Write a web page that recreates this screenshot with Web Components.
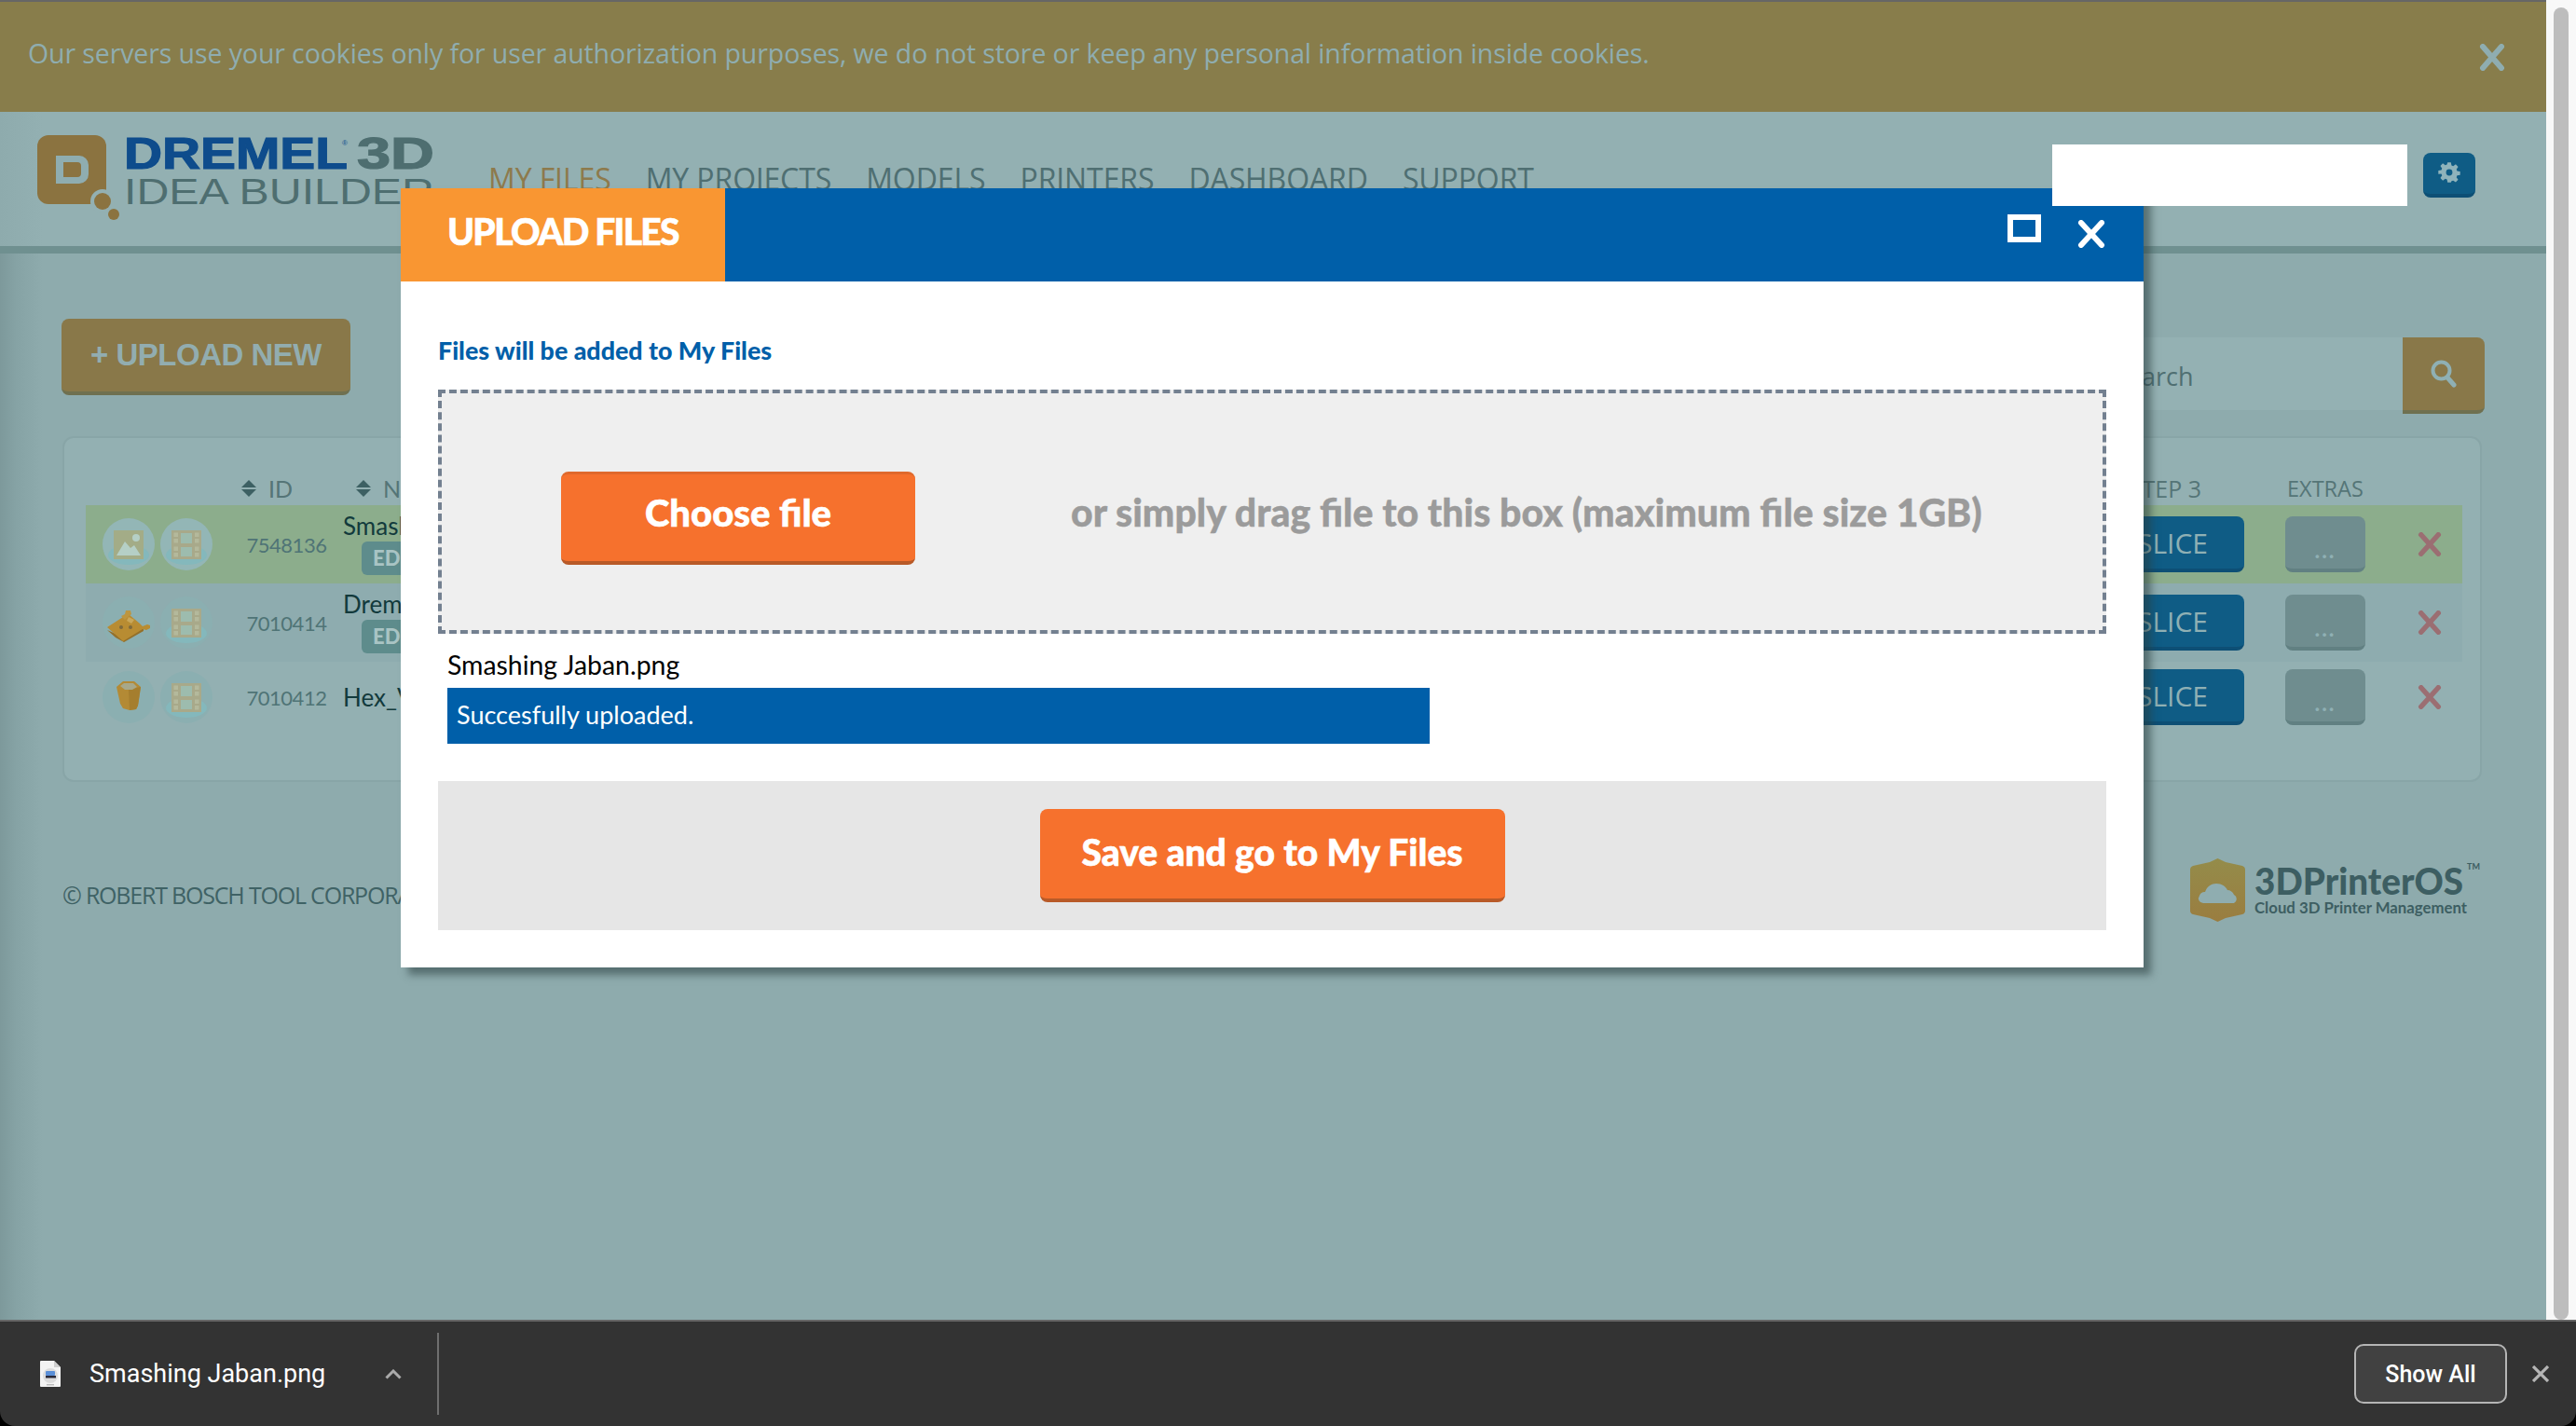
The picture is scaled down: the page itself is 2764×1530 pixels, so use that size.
<!DOCTYPE html>
<html lang="en">
<head>
<meta charset="utf-8">
<title>Upload files</title>
<style>
  html, body { margin: 0; padding: 0; background: #8eabad; overflow: hidden; }
</style>
</head>
<body>
<app-shell>
  <cookie-bar>Our servers use your cookies only for user authorization purposes, we do not store or keep any personal information inside cookies.</cookie-bar>
  <site-header></site-header>
  <files-toolbar></files-toolbar>
  <file-table>
    <file-row kind="image" file-id="7548136" name="Smashing Jaban" active editable></file-row>
    <file-row kind="base" file-id="7010414" name="Dremel Base" striped editable></file-row>
    <file-row kind="vase" file-id="7010412" name="Hex_Vase"></file-row>
  </file-table>
  <site-footer></site-footer>
  <upload-modal slot="modal"></upload-modal>
  <download-bar slot="bar"></download-bar>
</app-shell>

<script>
(() => {
  const rounded = `"Lato", "Open Sans", sans-serif`;
  const plain = `"Open Sans", "Liberation Sans", sans-serif`;

  const crossIcon = (w, h, color, sw) => `
    <svg width="${w}" height="${h}" viewBox="0 0 ${w} ${h}" style="display:block">
      <path d="M${sw / 2 + 1} ${sw / 2} L${w - sw / 2 - 1} ${h - sw / 2} M${w - sw / 2 - 1} ${sw / 2} L${sw / 2 + 1} ${h - sw / 2}"
        stroke="${color}" stroke-width="${sw}" stroke-linecap="round" fill="none"/>
    </svg>`;

  class AppShell extends HTMLElement {
    constructor() {
      super();
      this.attachShadow({ mode: 'open' });
      this.shadowRoot.innerHTML = `
        <style>
          :host { display: flex; flex-direction: column; width: 2764px; height: 1530px; overflow: hidden; }
          .top { display: flex; height: 1416px; position: relative; border-bottom: 2px solid #666; box-sizing: content-box; }
          .page {
            flex: 1; min-width: 0; position: relative; overflow: hidden;
            background: linear-gradient(90deg, #7d999b 0, #86a3a5 18px, #8eabad 46px, #8eabad 100%);
          }
          .rail { width: 32px; background: #f8f8f8; padding: 8px 8px 0; box-sizing: border-box; }
          .thumb { width: 16px; height: 1408px; background: #bdbdbd; border-radius: 8px; }
        </style>
        <div class="top">
          <div class="page"><slot></slot><slot name="modal"></slot></div>
          <div class="rail"><div class="thumb"></div></div>
        </div>
        <slot name="bar"></slot>
      `;
    }
  }

  class CookieBar extends HTMLElement {
    constructor() {
      super();
      this.attachShadow({ mode: 'open' });
      this.shadowRoot.innerHTML = `
        <style>
          :host {
            display: flex; align-items: center; justify-content: space-between; box-sizing: border-box;
            height: 120px; padding: 0 44px 0 30px; border-top: 2px solid #666;
            background: #887d4b; color: #8fadb0; font: 400 28.5px ${plain};
          }
          .t { margin-top: -8px; letter-spacing: -.1px; }
        </style>
        <span class="t"><slot></slot></span>
        ${crossIcon(28, 29, '#8fadb0', 6)}
      `;
    }
  }

  class BrandLogo extends HTMLElement {
    constructor() {
      super();
      this.attachShadow({ mode: 'open' });
      this.shadowRoot.innerHTML = `
        <style>:host { display: block; width: 430px; height: 92px; } svg { display: block; margin-top: -12px; }</style>
        <svg width="430" height="104" viewBox="0 -12 430 104">
          <rect x="0" y="0" width="74" height="74" rx="12" fill="#8b7340"/>
          <path d="M20 22h25a10 10 0 0 1 10 10v10a10 10 0 0 1-10 10H20z M28 29v16h15a4 4 0 0 0 4-4v-8a4 4 0 0 0-4-4z" fill="#8fadb0" fill-rule="evenodd"/>
          <circle cx="70" cy="71" r="13" fill="#93b0b2"/>
          <circle cx="70" cy="71" r="9" fill="#8b7340"/>
          <circle cx="82" cy="85" r="6" fill="#8b7340"/>
          <text x="93" y="36" font-family="Liberation Sans" font-weight="700" font-size="48" fill="#0e4c8c" textLength="240" lengthAdjust="spacingAndGlyphs" stroke="#0e4c8c" stroke-width="1.2">DREMEL</text>
          <text x="327" y="11" font-family="Liberation Sans" font-size="8" fill="#0e4c8c">®</text>
          <text x="343" y="36" font-family="Liberation Sans" font-weight="700" font-size="48" fill="#4e6e70" textLength="83" lengthAdjust="spacingAndGlyphs" stroke="#4e6e70" stroke-width="1.2">3D</text>
          <text x="93" y="74" font-family="Liberation Sans" font-size="39" fill="#4e6e70" textLength="333" lengthAdjust="spacingAndGlyphs">IDEA BUILDER</text>
        </svg>
      `;
    }
  }

  class SiteHeader extends HTMLElement {
    constructor() {
      super();
      this.attachShadow({ mode: 'open' });
      const links = ['MY FILES', 'MY PROJECTS', 'MODELS', 'PRINTERS', 'DASHBOARD', 'SUPPORT'];
      this.shadowRoot.innerHTML = `
        <style>
          :host {
            display: flex; align-items: flex-start; box-sizing: border-box; height: 152px;
            padding: 25px 76px 0 40px; border-bottom: 8px solid #6f9090;
            background: linear-gradient(90deg, #8eabad 0, #93b0b2 46px);
          }
          nav { display: flex; gap: 37px; margin: 25px 0 0 54px; font: 400 32px ${plain}; color: #4f6f72; white-space: nowrap; letter-spacing: -.1px; }
          nav span:first-child { color: #8d7a4c; }
          .blank { position: relative; z-index: 20; width: 381px; height: 66px; margin: 10px 17px 0 auto; background: #fff; }
          .gear {
            display: flex; align-items: center; justify-content: center; box-sizing: border-box;
            width: 56px; height: 48px; margin-top: 19px; padding-bottom: 3px;
            background: #0f5c85; border-bottom: 4px solid #0d4f75; border-radius: 8px;
          }
        </style>
        <brand-logo></brand-logo>
        <nav>${links.map(l => `<span>${l}</span>`).join('')}</nav>
        <div class="blank"></div>
        <div class="gear">
          <svg width="24" height="24" viewBox="0 0 24 24">
            <path fill-rule="evenodd" fill="#8fb3bb" d="M10 0h4l.7 3.6 2 .8 3-2 2.9 2.9-2 3 .8 2 3.6.7v4l-3.6.7-.8 2 2 3-2.9 2.9-3-2-2 .8L14 24h-4l-.7-3.6-2-.8-3 2-2.9-2.9 2-3-.8-2L-1 13.9v-4l3.6-.7.8-2-2-3 2.9-2.9 3 2 2-.8z M12 8.2a3.8 3.8 0 1 0 0 7.6 3.8 3.8 0 0 0 0-7.6z" transform="translate(1.2 1.2) scale(.9)"/>
          </svg>
        </div>
      `;
    }
  }

  class FilesToolbar extends HTMLElement {
    constructor() {
      super();
      this.attachShadow({ mode: 'open' });
      this.shadowRoot.innerHTML = `
        <style>
          :host { display: flex; align-items: flex-start; justify-content: space-between; box-sizing: border-box; height: 196px; padding: 70px 66px 0; }
          .upload {
            display: flex; align-items: center; justify-content: center; box-sizing: border-box;
            width: 310px; height: 82px; background: #897849; border-bottom: 4px solid #6f7050; border-radius: 8px;
            color: #92adb0; font: 700 33px "Liberation Sans", sans-serif; white-space: nowrap; letter-spacing: -.5px;
          }
          .search { display: flex; margin-top: 20px; height: 82px; }
          .input {
            width: 380px; height: 78px; padding: 5px 0 0 70px; box-sizing: border-box; background: #94b1b3;
            display: flex; align-items: center; color: #4f6f72; font: 400 27px ${plain};
          }
          .btn {
            display: flex; align-items: center; justify-content: center; box-sizing: border-box; width: 88px;
            background: #897849; border-bottom: 4px solid #6f7050; border-radius: 0 8px 8px 0;
          }
        </style>
        <div class="upload">+ UPLOAD NEW</div>
        <div class="search">
          <div class="input">Search</div>
          <div class="btn">
            <svg width="28" height="30" viewBox="0 0 28 30" fill="none" stroke="#8fb0b4">
              <circle cx="11.5" cy="11.5" r="9" stroke-width="4"/>
              <path d="M18 19l7 8" stroke-width="5" stroke-linecap="round"/>
            </svg>
          </div>
        </div>
      `;
    }
  }

  class FileTable extends HTMLElement {
    constructor() {
      super();
      this.attachShadow({ mode: 'open' });
      const arrows = `<svg width="16" height="18" viewBox="0 0 16 18"><path d="M8 0l8 8H0z M0 10h16l-8 8z" fill="#3d6063"/></svg>`;
      this.shadowRoot.innerHTML = `
        <style>
          :host {
            display: block; box-sizing: border-box; height: 371px; margin: 0 69px 0 67px; padding: 30px 19px 0 23px;
            background: #93b0b2; border: 2px solid #88a5a7; border-radius: 12px;
          }
          .head { display: flex; align-items: center; height: 42px; padding-top: 5px; font: 400 25px "Lato", sans-serif; color: #557577; white-space: nowrap; box-sizing: border-box; }
          .sort { display: flex; align-items: center; gap: 13px; }
          .id { margin-left: 167px; width: 123px; }
          .nm { margin-right: auto; }
          .step { margin-right: 92px; font: 400 25px ${plain}; }
          .extras { width: 188px; font: 400 23.5px ${plain}; }
        </style>
        <div class="head">
          <span class="sort id">${arrows}<span>ID</span></span>
          <span class="sort nm">${arrows}<span>Name</span></span>
          <span class="step">STEP 3</span>
          <span class="extras">EXTRAS</span>
        </div>
        <slot></slot>
      `;
    }
  }

  class FileThumb extends HTMLElement {
    constructor() {
      super();
      this.attachShadow({ mode: 'open' });
      const kind = this.getAttribute('kind');
      const holes = [15.5, 22, 30.5, 37].map(y =>
        `<rect x="14.5" y="${y}" width="4.5" height="4.5"/><rect x="37" y="${y}" width="4.5" height="4.5"/>`).join('');
      const art = {
        image: `<rect x="12" y="13" width="32" height="31" fill="#a3ac87"/>
          <path d="M15 40l9-15 6 7 4-3 7 11z" fill="#b5cfc6"/><circle cx="36" cy="21" r="4" fill="#b5cfc6"/>`,
        film: `<rect x="12" y="13" width="32" height="31" fill="#a8a98a"/>
          <g fill="#b4b99c">${holes}</g>
          <rect x="22" y="16" width="12" height="11" fill="#9dbcae"/>
          <rect x="22" y="31" width="12" height="10" fill="#9dbcae"/>`,
        base: `<path d="M5 36l9 8 9 5 21-12 0-4-21 11z" fill="#94702a"/>
          <path d="M5 33l17-11 6-3 6 5 6 5 3 3 5-2 3 1v3l-4 2-4-1-21 13z" fill="#b88c32"/>
          <path d="M20 21l4-2 1-4h5l1 4-4 3-3 3z" fill="#bd9640"/>
          <path d="M28 22l6 3-3 4-5-3z" fill="#c9a75a"/>
          <circle cx="20" cy="33" r="2" fill="#7e6a3c"/><circle cx="30" cy="33" r="2" fill="#7e6a3c"/>`,
        vase: `<path d="M15 17l7-6h12l7 6-3 20-2 4-7 1-7-2-3-5z" fill="#b38a35"/>
          <path d="M28 20l13-3-3 20-2 4-7 1z" fill="#a57e2e"/>
          <path d="M19 16l4-3h10l4 4-5 3h-8z" fill="#a7a88a"/>`,
      }[kind];
      const pool = kind === 'film' || kind === 'image';
      this.shadowRoot.innerHTML = `
        <style>
          :host { display: block; width: 56px; height: 56px; } svg { display: block; }
        </style>
        <svg width="56" height="56" viewBox="0 0 56 56">
          <circle cx="28" cy="28" r="28" fill="${this.hasAttribute('soft') ? '#8bafb1' : '#93b6b6'}"/>
          ${pool ? '<ellipse cx="28" cy="39.5" rx="22" ry="10.5" fill="#84b8bc"/>' : ''}
          ${art}
        </svg>
      `;
    }
  }

  class FileRow extends HTMLElement {
    constructor() {
      super();
      this.attachShadow({ mode: 'open' });
      const active = this.hasAttribute('active');
      const striped = this.hasAttribute('striped');
      const editable = this.hasAttribute('editable');
      const soft = active ? '' : 'soft';
      this.shadowRoot.innerHTML = `
        <style>
          :host {
            display: flex; align-items: center; height: ${editable ? 84 : 76}px; box-sizing: border-box; padding-left: 18px;
            background: ${active ? '#8cad8c' : striped ? '#8eacaf' : 'transparent'}; white-space: nowrap;
          }
          .thumbs { display: flex; gap: 6px; }
          .id { width: 121px; padding-left: 19px; text-align: center; font: 400 22px "Lato", sans-serif; color: #4f7476; letter-spacing: -.5px; }
          .name { flex: 1; min-width: 0; font: 400 26px "Lato", sans-serif; color: #123a3c; align-self: center; }
          .name div { line-height: 26px; }
          .edit {
            display: inline-block; margin: 4px 0 0 20px; width: 90px; height: 36px; line-height: 36px; text-align: left; padding-left: 12px; box-sizing: border-box;
            background: #5e8c8c; border-radius: 6px; color: #a9c4c4; font: 900 22px/36px "Lato", sans-serif;
          }
          .slice {
            display: flex; align-items: center; justify-content: center; box-sizing: border-box; width: 184px; height: 60px; padding-left: 30px;
            background: #0f5c85; border-bottom: 4px solid #0d4f75; border-radius: 8px; color: #8fb0b4; font: 400 30px ${plain};
          }
          .more {
            display: flex; align-items: flex-end; justify-content: center; box-sizing: border-box; width: 86px; height: 60px; margin-left: 44px; padding-bottom: 10px;
            background: #6f8d8f; border-bottom: 4px solid #618082; border-radius: 8px; color: #8fb0b4; font: 700 24px/20px "Lato", sans-serif; letter-spacing: 2px;
          }
          .del { margin: 0 22px 0 56px; }
        </style>
        <div class="thumbs">
          <file-thumb kind="${this.getAttribute('kind')}" ${soft}></file-thumb>
          <file-thumb kind="film" ${soft}></file-thumb>
        </div>
        <div class="id">${this.getAttribute('file-id')}</div>
        <div class="name">
          <div>${this.getAttribute('name')}</div>
          ${editable ? '<span class="edit">EDIT</span>' : ''}
        </div>
        <div class="slice">SLICE</div>
        <div class="more">...</div>
        <div class="del">${crossIcon(26, 26, '#9b6e72', 5.5)}</div>
      `;
    }
  }

  class SiteFooter extends HTMLElement {
    constructor() {
      super();
      this.attachShadow({ mode: 'open' });
      this.shadowRoot.innerHTML = `
        <style>
          :host { display: flex; align-items: center; justify-content: space-between; height: 68px; margin-top: 82px; padding: 0 62px 0 67px; color: #3f6265; }
          .copy { padding-top: 10px; font: 400 25px ${plain}; white-space: nowrap; letter-spacing: -1.2px; }
          svg { display: block; }
        </style>
        <span class="copy">© ROBERT BOSCH TOOL CORPORATION</span>
        <svg width="320" height="68" viewBox="0 0 320 68">
          <defs><linearGradient id="hexfill" x1="0" y1="0" x2="0" y2="1"><stop offset="0" stop-color="#948c4a"/><stop offset="1" stop-color="#9a7d40"/></linearGradient></defs>
          <path d="M29.500 0 L38 4 L56 8 Q59 9 59 12 L59 56 Q59 59 56 60 L38 64 L29.500 68 L21 64 L3 60 Q0 59 0 56 L0 12 Q0 9 3 8 L21 4Z" fill="url(#hexfill)"/>
          <path d="M14 48a5 5 0 0 1-4-8 6 6 0 0 1 6-4c2-6 7-9 12-9 6 0 10 3 12 7 3 0 6 2 7 5a5 5 0 0 1 0 9z" fill="#8fadb0"/>
          <text x="69" y="39" font-family="Lato" font-weight="900" font-size="39" fill="#3d5e62" textLength="224" lengthAdjust="spacingAndGlyphs">3DPrinterOS</text>
          <text x="297" y="12" font-family="Lato" font-weight="700" font-size="9" fill="#3d5e62">TM</text>
          <text x="69" y="59" font-family="Lato" font-weight="700" font-size="17" fill="#3d5e62" textLength="228" lengthAdjust="spacingAndGlyphs">Cloud 3D Printer Management</text>
        </svg>
      `;
    }
  }

  class ActionButton extends HTMLElement {
    constructor() {
      super();
      this.attachShadow({ mode: 'open' });
      this.shadowRoot.innerHTML = `
        <style>
          :host {
            display: flex; align-items: center; justify-content: center; box-sizing: border-box; height: 100px;
            background: #f6712d; border-bottom: 4px solid #b85a28; border-radius: 8px;
            color: #fff; font-family: ${rounded}; font-weight: 900; white-space: nowrap;
            -webkit-text-stroke: .6px #fff;
          }
        </style>
        <slot></slot>
      `;
    }
  }

  class DropZone extends HTMLElement {
    constructor() {
      super();
      this.attachShadow({ mode: 'open' });
      this.shadowRoot.innerHTML = `
        <style>
          :host {
            display: flex; align-items: flex-start; box-sizing: border-box; height: 262px; padding: 84px 0 0 128px;
            background: #efefef; border: 4px dashed #738090;
          }
          action-button { width: 380px; font-size: 40px; border-top: 3px solid #e0692c; padding-bottom: 11px; }
          .hint { margin: 19px 0 0 167px; color: #9b9b9b; font: 900 41px ${rounded}; white-space: nowrap; -webkit-text-stroke: .4px #9b9b9b; }
        </style>
        <action-button>Choose file</action-button>
        <span class="hint">or simply drag file to this box (maximum file size 1GB)</span>
      `;
    }
  }

  class UploadModal extends HTMLElement {
    constructor() {
      super();
      this.attachShadow({ mode: 'open' });
      this.shadowRoot.innerHTML = `
        <style>
          :host {
            position: absolute; z-index: 10; left: 430px; top: 202px; width: 1870px; height: 836px;
            display: flex; flex-direction: column; background: #fff; box-shadow: 8px 8px 8px rgba(40, 60, 62, .55);
          }
          header { display: flex; align-items: flex-start; height: 100px; background: #005fa9; flex: none; }
          .title {
            display: flex; align-items: center; box-sizing: border-box; width: 348px; height: 100px; padding: 0 0 9px 50px; margin-right: auto;
            background: #f99632; color: #fff; font: 900 39px ${rounded}; -webkit-text-stroke: .6px #fff; white-space: nowrap; letter-spacing: -1.7px;
          }
          .max { width: 36px; height: 30px; box-sizing: border-box; margin-top: 28px; border: 6px solid #fff; }
          .close { margin: 34px 41px 0 39px; }
          main { display: flex; flex-direction: column; padding: 0 40px; }
          .label { margin: 58px 0 0; height: 58px; color: #005fa9; font: 900 26.8px/32px ${rounded}; white-space: nowrap; }
          .file { margin: 13px 0 0 10px; height: 40px; font: 400 28.4px/40px "Lato", sans-serif; color: #000; }
          .bar {
            box-sizing: border-box; width: 1054px; height: 60px; margin: 5px 0 0 10px; padding: 0 0 4px 10px;
            display: flex; align-items: center; background: #005fa9; color: #fff; font: 400 27px "Lato", sans-serif;
          }
          .foot { display: flex; align-items: center; justify-content: center; height: 160px; margin-top: 40px; background: #e6e6e6; }
          .foot action-button { width: 499px; font-size: 39px; padding-bottom: 4px; }
        </style>
        <header>
          <div class="title">UPLOAD FILES</div>
          <div class="max"></div>
          <div class="close">${crossIcon(30, 30, '#fff', 6)}</div>
        </header>
        <main>
          <div class="label">Files will be added to My Files</div>
          <drop-zone></drop-zone>
          <div class="file">Smashing Jaban.png</div>
          <div class="bar">Succesfully uploaded.</div>
          <div class="foot"><action-button>Save and go to My Files</action-button></div>
        </main>
      `;
    }
  }

  class DownloadBar extends HTMLElement {
    constructor() {
      super();
      this.attachShadow({ mode: 'open' });
      this.shadowRoot.innerHTML = `
        <style>
          :host { display: block; height: 112px; background: #000; }
          .in {
            display: flex; align-items: center; height: 112px; padding: 0 29px 0 43px; box-sizing: border-box;
            background: #333; border-radius: 0 0 16px 16px; color: #fff; font: 400 27px Roboto, sans-serif;
          }
          .name { margin-left: 31px; white-space: nowrap; }
          .chev { margin-left: 64px; display: block; }
          .sep { width: 2px; height: 88px; margin-left: 38px; background: #6f6f6f; }
          .all {
            display: flex; align-items: center; justify-content: center; box-sizing: border-box; width: 164px; height: 64px; margin-left: auto;
            background: #414141; border: 2px solid #b5b5b5; border-radius: 10px; font-weight: 500; font-size: 25px;
          }
          .x { margin-left: 27px; display: block; }
        </style>
        <div class="in">
          <svg width="22" height="28" viewBox="0 0 22 28" style="display:block">
            <path d="M1 0h14l7 7v20a1 1 0 0 1-1 1H1a1 1 0 0 1-1-1V1a1 1 0 0 1 1-1z" fill="#f4f4f4"/>
            <path d="M15 0l7 7h-7z" fill="#cfcfcf"/>
            <circle cx="11" cy="16" r="8" fill="#dcdcdc"/>
            <rect x="6" y="11" width="10" height="5" rx="1" fill="#5a8fd8"/>
            <rect x="6" y="16" width="11" height="2.500" fill="#2a2a3a"/>
            <rect x="7" y="25" width="8" height="1.500" fill="#bbb"/>
          </svg>
          <span class="name">Smashing Jaban.png</span>
          <svg class="chev" width="18" height="11" viewBox="0 0 18 11"><path d="M1.500 9.500L9 2l7.500 7.500" fill="none" stroke="#aaa" stroke-width="3"/></svg>
          <div class="sep"></div>
          <div class="all">Show All</div>
          <svg class="x" width="18" height="18" viewBox="0 0 18 18"><path d="M1 1l16 16M17 1L1 17" stroke="#b5b5b5" stroke-width="3.200"/></svg>
        </div>
      `;
    }
  }

  customElements.define('app-shell', AppShell);
  customElements.define('cookie-bar', CookieBar);
  customElements.define('brand-logo', BrandLogo);
  customElements.define('site-header', SiteHeader);
  customElements.define('files-toolbar', FilesToolbar);
  customElements.define('file-table', FileTable);
  customElements.define('file-thumb', FileThumb);
  customElements.define('file-row', FileRow);
  customElements.define('site-footer', SiteFooter);
  customElements.define('action-button', ActionButton);
  customElements.define('drop-zone', DropZone);
  customElements.define('upload-modal', UploadModal);
  customElements.define('download-bar', DownloadBar);
})();
</script>
</body>
</html>
